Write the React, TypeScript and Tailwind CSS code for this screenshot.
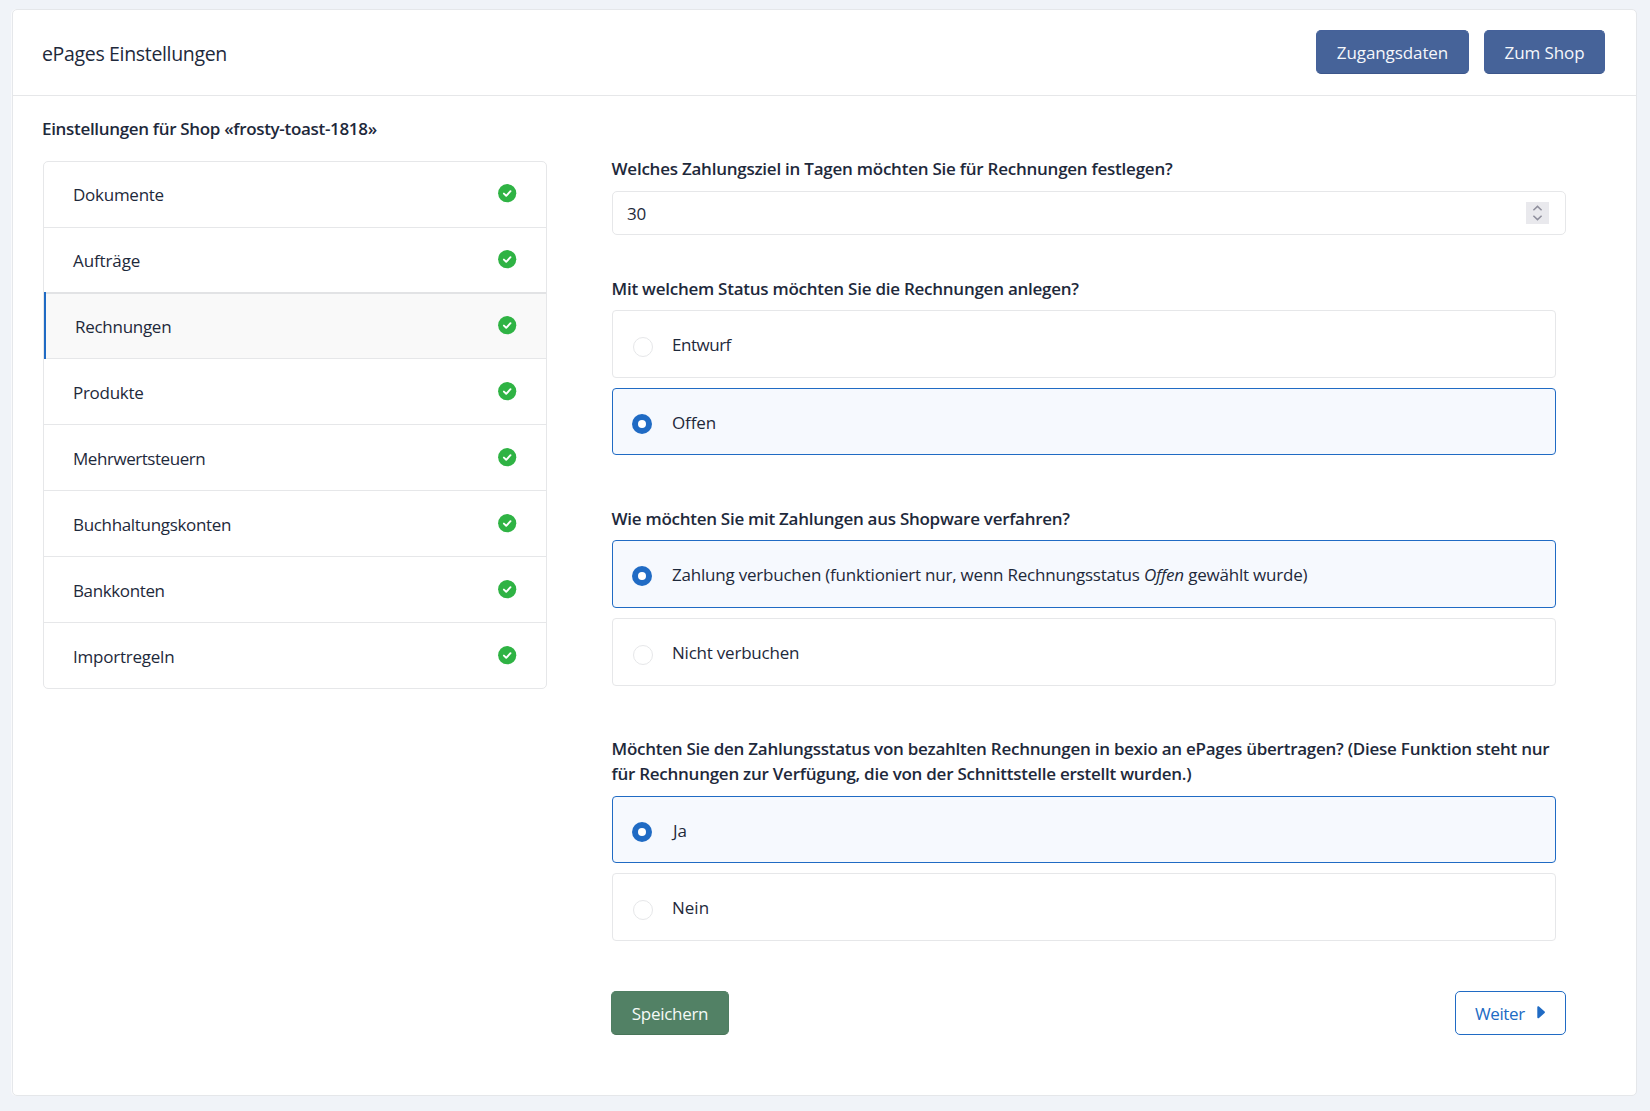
import type { ReactNode } from 'react'

const steps = [
  { label: 'Dokumente', tracking: 'tracking-[-0.26px]' },
  { label: 'Aufträge', tracking: 'tracking-[-0.12px]' },
  { label: 'Rechnungen', tracking: 'tracking-[-0.28px]', active: true },
  { label: 'Produkte', tracking: 'tracking-[-0.28px]' },
  { label: 'Mehrwertsteuern', tracking: 'tracking-[-0.45px]' },
  { label: 'Buchhaltungskonten', tracking: 'tracking-[-0.33px]' },
  { label: 'Bankkonten', tracking: 'tracking-[-0.38px]' },
  { label: 'Importregeln', tracking: 'tracking-[-0.23px]' },
]

function CheckBadge() {
  return (
    <svg className="size-[19px] shrink-0" viewBox="0 0 19 19" fill="none">
      <circle cx="9.2" cy="9.2" r="9.1" fill="#2fb344" />
      <path d="M5.9 9.6 8.2 11.8 12.5 7.2" stroke="#fff" strokeWidth="1.9" strokeLinecap="round" strokeLinejoin="round" />
    </svg>
  )
}

function StepList() {
  return (
    <nav className="w-[504px] overflow-hidden rounded-[5px] border border-[#e6e7e9]">
      {steps.map((s, i) => (
        <a
          key={s.label}
          className={
            'flex justify-between pr-[29px] ' +
            (i === 0 ? 'h-[65px] ' : s.active ? '-mt-px h-[66px] border-t-2 border-t-[#e2e3e5] ' : 'h-[66px] border-t border-[#e6e7e9] ') +
            (i > 2 ? 'pt-px ' : '') +
            (s.active ? 'relative bg-[#f9f9f9] pl-[31px]' : 'pl-[29px]')
          }
        >
          {s.active && <span className="absolute -top-0.5 bottom-[-1px] left-0 w-0.5 bg-[#206bc4]" />}
          <span className={'mt-5 ' + s.tracking}>{s.label}</span>
          <span className="mt-[22px]">
            <CheckBadge />
          </span>
        </a>
      ))}
    </nav>
  )
}

function Radio({ checked }: { checked?: boolean }) {
  return checked ? (
    <span className="mt-[25px] ml-[19px] flex size-5 shrink-0 items-center justify-center rounded-full bg-[#206bc4]">
      <span className="size-2 rounded-full bg-white" />
    </span>
  ) : (
    <span className="mt-[26px] ml-5 size-5 shrink-0 rounded-full border border-[#e6e7e9] bg-white" />
  )
}

function Option({ checked, className, children }: { checked?: boolean; className: string; children: ReactNode }) {
  return (
    <label
      className={
        'flex w-[944px] rounded-[4px] border ' +
        (checked ? 'border-[#206bc4] bg-[#f6f9fe] ' : 'border-[#e6e7e9] bg-white ') +
        className
      }
    >
      <Radio checked={checked} />
      <span className={'mt-[21px] ' + (checked ? 'ml-5' : 'ml-[19px]')}>{children}</span>
    </label>
  )
}

export default function App() {
  return (
    <div className="h-[1111px] w-[1650px] overflow-hidden bg-[#f0f3f8] pt-[9px] pl-3 font-['Open_Sans',sans-serif] text-[17px] leading-[25px] text-[#1e293b]">
      <main className="h-[1087px] w-[1625px] rounded-[5px] border border-[#e5e7ea] bg-white shadow-[-1px_0_0_#f9fafc]">
        <header className="flex h-[86px] justify-between border-b border-[#e6e7e9] pr-[31px] pl-[29px]">
          <h1 className="mt-[31px] text-[19.5px] tracking-[-0.33px]">ePages Einstellungen</h1>
          <div className="mt-5 flex gap-[15px] text-[#f5f7fb]">
            <button className="flex h-11 w-[153px] justify-center rounded-[5px] border border-[#45619a] border-b-[#3c568b] bg-[#466399] pt-[9px] tracking-[-0.1px]">Zugangsdaten</button>
            <button className="flex h-11 w-[121px] justify-center rounded-[5px] border border-[#45619a] border-b-[#3c568b] bg-[#466399] pt-[9px] tracking-[-0.1px]">Zum Shop</button>
          </div>
        </header>

        <div className="flex">
          <section className="w-[568px] pt-5 pl-[30px]">
            <h2 className="-ml-px mb-5 font-semibold tracking-[-0.32px]">Einstellungen für Shop «frosty-toast-1818»</h2>
            <StepList />
          </section>

          <section className="w-[985px] pt-[60px] pl-[30px]">
            <h3 className="pl-[0.5px] font-semibold tracking-[-0.24px]">Welches Zahlungsziel in Tagen möchten Sie für Rechnungen festlegen?</h3>
            <div className="mt-2.5 ml-px flex h-11 w-[954px] justify-between rounded-[5px] border border-[#e6e7e9] pr-4 pl-3.5">
              <span className="mt-[9px] tracking-[-0.3px]">30</span>
              <span className="mt-2.5 h-[22px] w-[23px] bg-[#e9e9ed]">
                <svg className="h-[22px] w-[23px]" viewBox="0 0 23 22" fill="none" stroke="#8f8f9d" strokeWidth="1.5">
                  <path d="M7.4 8.3 11.5 4.4 15.6 8.3M7.4 13.7 11.5 17.6 15.6 13.7" />
                </svg>
              </span>
            </div>

            <h3 className="mt-[41px] pl-[0.5px] font-semibold tracking-[-0.25px]">Mit welchem Status möchten Sie die Rechnungen anlegen?</h3>
            <div className="mt-[9px] ml-px">
              <Option className="h-[68px] tracking-[-0.48px]">Entwurf</Option>
              <Option checked className="mt-2.5 h-[67px] tracking-[-0.1px]">Offen</Option>
            </div>

            <h3 className="mt-[51px] pl-[0.5px] font-semibold tracking-[-0.27px]">Wie möchten Sie mit Zahlungen aus Shopware verfahren?</h3>
            <div className="mt-[9px] ml-px">
              <Option checked className="h-[68px] tracking-[-0.215px]">
                Zahlung verbuchen (funktioniert nur, wenn Rechnungsstatus <em>Offen</em> gewählt wurde)
              </Option>
              <Option className="mt-2.5 h-[68px] tracking-[-0.22px]">Nicht verbuchen</Option>
            </div>

            <h3 className="mt-[50px] pl-[0.5px] font-semibold whitespace-nowrap tracking-[-0.255px]">
              Möchten Sie den Zahlungsstatus von bezahlten Rechnungen in bexio an ePages übertragen? (Diese Funktion steht nur
              <br />
              für Rechnungen zur Verfügung, die von der Schnittstelle erstellt wurden.)
            </h3>
            <div className="mt-[10px] ml-px">
              <Option checked className="h-[67px] indent-px">Ja</Option>
              <Option className="mt-2.5 h-[68px]">Nein</Option>
            </div>

            <div className="mt-[50px] flex w-[955px] justify-between">
              <button className="flex h-11 w-[118px] justify-center rounded-[5px] border border-[#4f7e62] border-b-[#487559] bg-[#528165] pt-[9px] tracking-[-0.28px] text-[#f5faf7]">Speichern</button>
              <button className="flex h-11 w-[111px] rounded-[5px] border border-[#206bc4] pt-[9px] pl-[19px] tracking-[-0.4px] text-[#206bc4]">
                Weiter
                <svg className="mt-[4px] ml-3 h-[14px] w-[9px]" viewBox="0 0 9 14" fill="#206bc4">
                  <path d="M.3 2.2C.3 1.3 1.4.9 2 1.5L7.6 6.6C8.1 7 8.1 7.6 7.6 8L2 13C1.4 13.6.3 13.2.3 12.3Z" />
                </svg>
              </button>
            </div>
          </section>
        </div>
      </main>
    </div>
  )
}
